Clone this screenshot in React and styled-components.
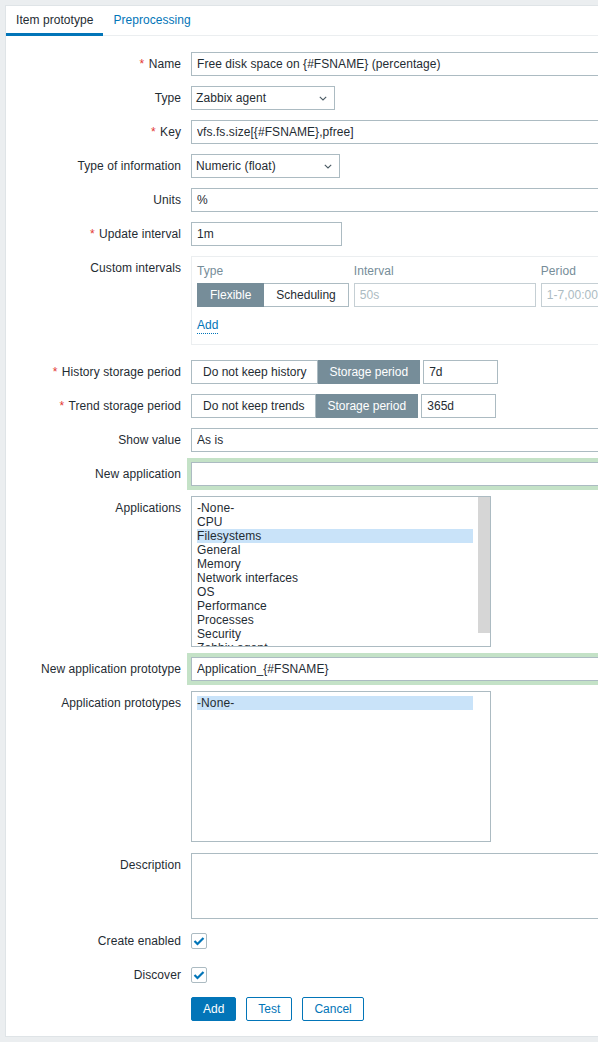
import React from "react";
import styled, { createGlobalStyle, css } from "styled-components";

const Global = createGlobalStyle`
  html, body { margin: 0; padding: 0; background: #ebeef0; overflow: hidden; }
  body { font-family: "Liberation Sans", Arial, sans-serif; font-size: 12px; color: #1f2c33; }
  * { box-sizing: border-box; }
`;

const Page = styled.div`
  padding: 5px 0 6px 5px;
`;

const Container = styled.div`
  background: #fff;
  border: 1px solid #dfe4e7;
  border-right: none;
  overflow: hidden;
`;

const TabBar = styled.div`
  display: flex;
  border-bottom: 1px solid #ebeef0;
`;

const Tab = styled.div`
  padding: 7px 10px 6px;
  line-height: 14px;
  letter-spacing: 0.05px;
  border-bottom: 3px solid ${(p) => (p.$active ? "#0275b8" : "transparent")};
  margin-bottom: -1px;
  color: ${(p) => (p.$active ? "#1f2c33" : "#0275b8")};
`;

const Form = styled.div`
  display: grid;
  grid-template-columns: 175px 1fr;
  column-gap: 10px;
  row-gap: 10px;
  padding: 16px 0 15px 0;
`;

const Label = styled.div`
  text-align: right;
  line-height: 24px;
  white-space: nowrap;
  letter-spacing: 0.08px;
`;

const Req = styled.span`
  color: #e33734;
  margin-right: 1px;
`;

const Field = styled.div`
  display: flex;
  align-items: ${(p) => (p.$center ? "center" : "flex-start")};
  min-width: 0;
  min-height: 24px;
  margin-bottom: ${(p) => p.$mb || 0}px;
`;

const Input = styled.input`
  flex: none;
  width: ${(p) => p.$w}px;
  height: 24px;
  border: 1px solid #acbbc2;
  padding: 0 5px;
  font-family: inherit;
  font-size: 12px;
  letter-spacing: 0.07px;
  color: #1f2c33;
  background: #fff;
  outline: none;
  ${(p) =>
    p.$new &&
    css`
      box-shadow: 0 0 0 4px #c4e2c7;
    `}
  ${(p) =>
    p.$disabled &&
    css`
      border-color: #c5cfd4;
      color: #acbbc2;
    `}
`;

const Select = styled.div`
  flex: none;
  width: ${(p) => p.$w}px;
  height: 24px;
  border: 1px solid #acbbc2;
  padding: 0 4px;
  display: flex;
  align-items: center;
  justify-content: space-between;
  line-height: 22px;
  letter-spacing: 0.07px;
  background: #fff;
  svg { margin-right: 3px; }
`;

const Segmented = styled.div`
  display: flex;
  flex: none;
`;

const Seg = styled.div`
  height: 24px;
  line-height: 22px;
  padding: 0 ${(p) => p.$pad || 11}px;
  border: 1px solid ${(p) => (p.$active ? "#768d99" : "#acbbc2")};
  background: ${(p) => (p.$active ? "#768d99" : "#fff")};
  color: ${(p) => (p.$active ? "#fff" : "#1f2c33")};
  white-space: nowrap;
  & + & { border-left: none; }
`;

const StorageRow = styled.div`
  display: flex;
  gap: 3px;
`;

const IntervalBox = styled.div`
  flex: none;
  width: 560px;
  border: 1px solid #ebeef0;
  padding: 5px 5px 10px;
`;

const IntervalGrid = styled.div`
  display: grid;
  grid-template-columns: auto 182px 183px;
  column-gap: 5px;
  row-gap: 3px;
  justify-content: start;
`;

const ColHead = styled.div`
  color: #768d99;
  line-height: 18px;
  letter-spacing: 0.08px;
`;

const AddLink = styled.span`
  display: inline-block;
  margin-top: 10px;
  line-height: 16px;
  color: #0275b8;
  border-bottom: 1px dotted #0275b8;
`;

const ListBox = styled.div`
  flex: none;
  width: 300px;
  height: 151px;
  border: 1px solid #acbbc2;
  display: flex;
  overflow: hidden;
  background: #fff;
`;

const Options = styled.div`
  flex: 1;
  padding: 4px 5px 0 5px;
  overflow: hidden;
`;

const Option = styled.div`
  line-height: 14px;
  height: 14px;
  white-space: nowrap;
  letter-spacing: 0.1px;
  color: #1f2c33;
  background: ${(p) => (p.$selected ? "#c9e3f9" : "transparent")};
`;

const ScrollTrack = styled.div`
  width: 12px;
  flex: none;
`;

const Thumb = styled.div`
  height: 136px;
  background: #d6d6d6;
`;

const TextArea = styled.textarea`
  flex: none;
  width: 453px;
  height: 66px;
  border: 1px solid #acbbc2;
  resize: none;
  font-family: inherit;
  font-size: 12px;
  outline: none;
`;

const CheckBox = styled.div`
  width: 16px;
  height: 16px;
  border: 1px solid #acbbc2;
  border-radius: 2px;
  display: flex;
  align-items: center;
  justify-content: center;
  background: #fff;
`;

const Buttons = styled.div`
  display: flex;
  gap: 10px;
`;

const Button = styled.div`
  height: 24px;
  line-height: 22px;
  padding: 0 11px;
  border: 1px solid #0275b8;
  border-radius: 2px;
  background: ${(p) => (p.$primary ? "#0275b8" : "#fff")};
  color: ${(p) => (p.$primary ? "#fff" : "#0275b8")};
`;

const Chevron = () => (
  <svg width="8" height="5" viewBox="0 0 8 5">
    <polyline points="0.8,0.8 4,4 7.2,0.8" fill="none" stroke="#4a5a63" strokeWidth="1.1" />
  </svg>
);

const Check = () => (
  <svg width="12" height="10" viewBox="0 0 12 10">
    <polyline points="1.5,5 4.5,8 10.5,2" fill="none" stroke="#0275b8" strokeWidth="2.2" />
  </svg>
);

const apps = [
  "-None-",
  "CPU",
  "Filesystems",
  "General",
  "Memory",
  "Network interfaces",
  "OS",
  "Performance",
  "Processes",
  "Security",
  "Zabbix agent",
];

export default function App() {
  return (
    <>
      <Global />
      <Page>
        <Container>
          <TabBar>
            <Tab $active>Item prototype</Tab>
            <Tab>Preprocessing</Tab>
          </TabBar>
          <Form>
            <Label><Req>*</Req> Name</Label>
            <Field><Input $w={453} defaultValue="Free disk space on {#FSNAME} (percentage)" /></Field>

            <Label>Type</Label>
            <Field><Select $w={144}><span>Zabbix agent</span><Chevron /></Select></Field>

            <Label><Req>*</Req> Key</Label>
            <Field><Input $w={453} defaultValue="vfs.fs.size[{#FSNAME},pfree]" /></Field>

            <Label>Type of information</Label>
            <Field><Select $w={149}><span>Numeric (float)</span><Chevron /></Select></Field>

            <Label>Units</Label>
            <Field><Input $w={453} defaultValue="%" /></Field>

            <Label><Req>*</Req> Update interval</Label>
            <Field><Input $w={151} defaultValue="1m" /></Field>

            <Label>Custom intervals</Label>
            <Field $mb={5}>
              <IntervalBox>
                <IntervalGrid>
                  <ColHead>Type</ColHead>
                  <ColHead>Interval</ColHead>
                  <ColHead>Period</ColHead>
                  <Segmented>
                    <Seg $active $pad={12}>Flexible</Seg>
                    <Seg $pad={12}>Scheduling</Seg>
                  </Segmented>
                  <Input $w={182} $disabled defaultValue="50s" />
                  <Input $w={183} $disabled defaultValue="1-7,00:00-24:00" />
                </IntervalGrid>
                <AddLink>Add</AddLink>
              </IntervalBox>
            </Field>

            <Label><Req>*</Req> History storage period</Label>
            <Field>
              <StorageRow>
                <Segmented>
                  <Seg>Do not keep history</Seg>
                  <Seg $active>Storage period</Seg>
                </Segmented>
                <Input $w={75} defaultValue="7d" />
              </StorageRow>
            </Field>

            <Label><Req>*</Req> Trend storage period</Label>
            <Field>
              <StorageRow>
                <Segmented>
                  <Seg>Do not keep trends</Seg>
                  <Seg $active>Storage period</Seg>
                </Segmented>
                <Input $w={75} defaultValue="365d" />
              </StorageRow>
            </Field>

            <Label>Show value</Label>
            <Field><Input $w={453} defaultValue="As is" /></Field>

            <Label>New application</Label>
            <Field><Input $w={453} $new defaultValue="" /></Field>

            <Label>Applications</Label>
            <Field>
              <ListBox>
                <Options>
                  {apps.map((a) => (
                    <Option key={a} $selected={a === "Filesystems"}>{a}</Option>
                  ))}
                </Options>
                <ScrollTrack><Thumb /></ScrollTrack>
              </ListBox>
            </Field>

            <Label>New application prototype</Label>
            <Field><Input $w={453} $new defaultValue="Application_{#FSNAME}" /></Field>

            <Label>Application prototypes</Label>
            <Field $mb={1}>
              <ListBox>
                <Options>
                  <Option $selected>-None-</Option>
                </Options>
                <ScrollTrack />
              </ListBox>
            </Field>

            <Label>Description</Label>
            <Field><TextArea /></Field>

            <Label>Create enabled</Label>
            <Field $center><CheckBox><Check /></CheckBox></Field>

            <Label>Discover</Label>
            <Field $center><CheckBox><Check /></CheckBox></Field>

            <div />
            <Field>
              <Buttons>
                <Button $primary>Add</Button>
                <Button>Test</Button>
                <Button>Cancel</Button>
              </Buttons>
            </Field>
          </Form>
        </Container>
      </Page>
    </>
  );
}
